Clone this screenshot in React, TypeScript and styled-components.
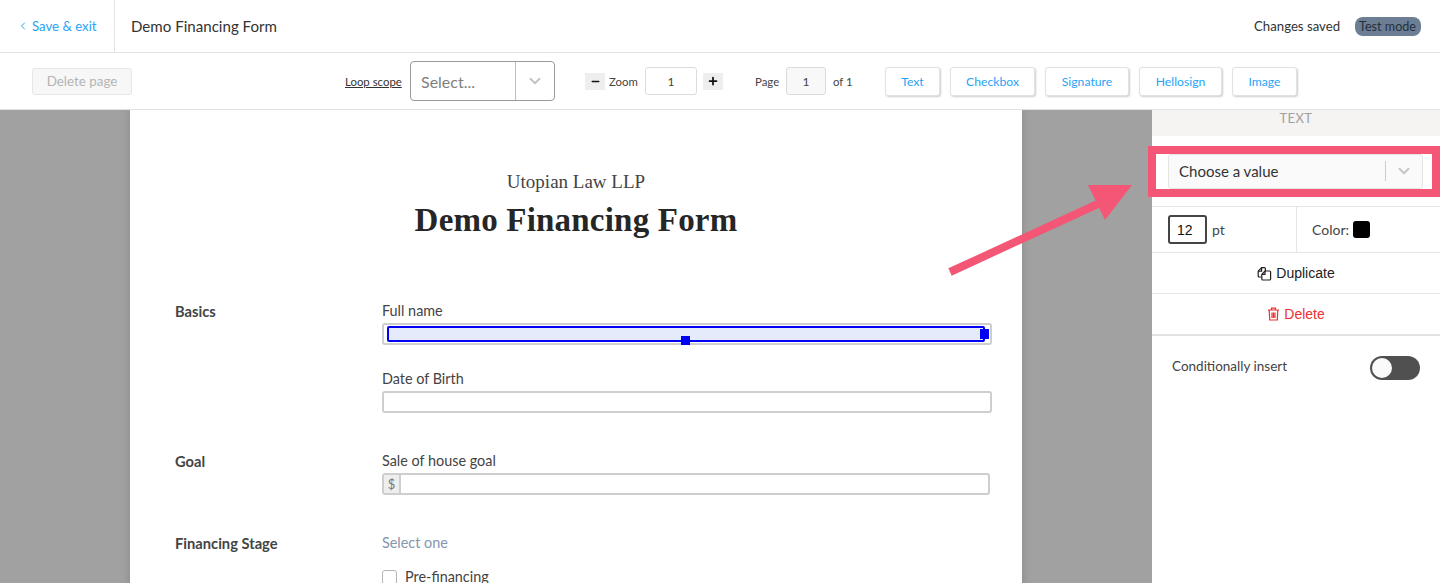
import styled, { createGlobalStyle } from "styled-components";
import { ChevronDown, ChevronLeft, Minus, Plus } from "lucide-react";

const GlobalStyle = createGlobalStyle`
	html, body {
		margin: 0;
		padding: 0;
		height: 583px;
		overflow: hidden;
		background: #fff;
		font-family: "Lato", "Noto Sans", sans-serif;
		color: #333;
	}
	* {
		box-sizing: border-box;
	}
`;

const Screen = styled.div`
	position: relative;
	width: 1440px;
	height: 583px;
	overflow: hidden;
	display: flex;
	flex-direction: column;
`;

const Header = styled.header`
	height: 53px;
	flex: none;
	display: flex;
	align-items: stretch;
	border-bottom: 1px solid #e2e2e2;
`;

const BackLink = styled.a`
	width: 115px;
	padding-left: 17px;
	display: flex;
	align-items: center;
	gap: 3px;
	font-size: 13.2px;
	color: #27a4f5;
	border-right: 1px solid #e4e4e4;
`;

const FormName = styled.div`
	flex: 1;
	padding-left: 16px;
	display: flex;
	align-items: center;
	font-size: 15.1px;
	color: #333;
`;

const SaveStatus = styled.div`
	display: flex;
	align-items: center;
	padding-right: 19px;
	gap: 15px;
	font-size: 13.2px;
	color: #333;
`;

const TestBadge = styled.span`
	background: #6c7e93;
	color: #25303c;
	font-size: 12.6px;
	line-height: 19px;
	height: 19px;
	padding: 0 5px 0 4px;
	border-radius: 8px;
`;

const Toolbar = styled.div`
	height: 57px;
	flex: none;
	padding-left: 32px;
	display: flex;
	align-items: center;
	border-bottom: 1px solid #e2e2e2;
	font-size: 11.4px;
	color: #444;
`;

const DeletePage = styled.button`
	width: 100px;
	height: 27px;
	margin-right: 213px;
	padding: 0;
	background: #f7f7f7;
	border: 1px solid #e6e6e6;
	border-radius: 3px;
	color: #b4b4b4;
	font: 13.4px "Lato", sans-serif;
`;

const LoopLabel = styled.a`
	width: 65px;
	color: #333;
	font-size: 11.4px;
	text-decoration: underline;
`;

const LoopSelect = styled.div`
	width: 145px;
	height: 40px;
	margin-right: 30px;
	display: flex;
	align-items: stretch;
	border: 1px solid #9a9a9a;
	border-radius: 4px;
`;

const SelectText = styled.div`
	flex: 1;
	padding-left: 10px;
	display: flex;
	align-items: center;
	font-size: 16px;
	color: #808080;
`;

const SelectCaret = styled.div`
	width: 39px;
	border-left: 1px solid #bdbdbd;
	display: flex;
	align-items: center;
	justify-content: center;
	color: #c4c4c4;
`;

const StepButton = styled.div<{ $left?: number }>`
	width: 20px;
	height: 17px;
	margin-left: ${(props) => props.$left ?? 0}px;
	background: #eee;
	display: flex;
	align-items: center;
	justify-content: center;
	color: #111;
`;

const ToolLabel = styled.span<{ $left: number; $width: number }>`
	margin-left: ${(props) => props.$left}px;
	width: ${(props) => props.$width}px;
	white-space: nowrap;
`;

const NumberBox = styled.div<{ $width: number; $filled?: boolean }>`
	width: ${(props) => props.$width}px;
	height: 28px;
	display: flex;
	align-items: center;
	justify-content: center;
	font-size: 12px;
	color: #444;
	background: ${(props) => (props.$filled ? "#f8f8f8" : "#fff")};
	border: 1px solid #dcdcdc;
	border-radius: 3px;
`;

const FieldButton = styled.button<{ $width: number }>`
	width: ${(props) => props.$width}px;
	height: 29px;
	margin-right: 10px;
	padding: 0;
	background: #fff;
	border: 1px solid #e2e2e2;
	border-radius: 3px;
	box-shadow: 1px 1px 2px rgba(0, 0, 0, 0.2);
	color: #27a4f5;
	font: 12.2px "Lato", sans-serif;
`;

const Workspace = styled.div`
	flex: 1;
	min-height: 0;
	display: flex;
`;

const Canvas = styled.main`
	width: 1152px;
	flex: none;
	padding-left: 130px;
	background: #a1a1a1;
	overflow: hidden;
`;

const Page = styled.div`
	width: 892px;
	height: 600px;
	padding: 62px 30px 0 45px;
	background: #fff;
	box-shadow: 0 0 8px rgba(0, 0, 0, 0.15);
`;

const PageHeading = styled.div`
	margin-right: 15px;
	text-align: center;
`;

const FirmName = styled.div`
	font: 19px/20px "Liberation Serif", serif;
	color: #444;
`;

const FormTitle = styled.h1`
	margin: 9px 0 0;
	font: bold 33px/38px "Liberation Serif", serif;
	letter-spacing: 0.2px;
	color: #262626;
`;

const FormSection = styled.section<{ $top: number }>`
	margin-top: ${(props) => props.$top}px;
	display: grid;
	grid-template-columns: 207px 1fr;
`;

const SectionName = styled.div`
	font-size: 14.7px;
	line-height: 20px;
	font-weight: 700;
	color: #444;
`;

const Fields = styled.div`
	display: flex;
	flex-direction: column;
`;

const FieldLabel = styled.label<{ $top?: number; $hint?: boolean }>`
	display: block;
	margin-top: ${(props) => props.$top ?? 0}px;
	font-size: 14.4px;
	line-height: 20px;
	color: ${(props) => (props.$hint ? "#8396ae" : "#444")};
`;

const TextBox = styled.div<{ $narrow?: boolean }>`
	position: relative;
	height: 22px;
	margin-top: 2px;
	width: ${(props) => (props.$narrow ? 608 : 610)}px;
	display: flex;
	background: #fff;
	border: 2px solid #cecece;
	border-radius: 3px;
`;

const Addon = styled.span`
	width: 17px;
	display: flex;
	align-items: center;
	justify-content: center;
	background: #eee;
	border-right: 2px solid #cecece;
	font-size: 13px;
	color: #777;
`;

const Selection = styled.div`
	position: absolute;
	left: 3px;
	right: 5px;
	top: 1px;
	height: 16px;
	background: #e6ebfb;
	border: 2px solid #0000f5;
	border-radius: 2px;
`;

const Handle = styled.span<{ $edge: "right" | "bottom" }>`
	position: absolute;
	width: 9px;
	height: 9px;
	background: #0000f5;
	${(props) => (props.$edge === "right" ? "right: -6px; top: 1px; height: 10px;" : "left: 292px; bottom: -5px;")}
`;

const CheckRow = styled.div`
	display: flex;
	align-items: center;
	gap: 8px;
	margin-top: 14px;
	font-size: 14.4px;
	line-height: 20px;
	color: #444;
`;

const CheckBox = styled.span`
	width: 15px;
	height: 15px;
	background: #fff;
	border: 1px solid #b5b5b5;
	border-radius: 3px;
`;

const Sidebar = styled.aside`
	flex: 1;
	background: #fff;
`;

const SidebarTitle = styled.div`
	height: 26px;
	background: #f5f4f3;
	text-align: center;
	font-size: 13px;
	line-height: 17px;
	letter-spacing: 0.4px;
	color: #a0a0a0;
`;

const ValueRow = styled.div`
	height: 71px;
	padding: 18px 17px 0 16px;
	border-bottom: 1px solid #e6e6e6;
`;

const ValueSelect = styled.div`
	height: 35px;
	padding: 0 0 2px 10px;
	display: flex;
	align-items: center;
	background: #fafafa;
	border: 1px solid #e4e4e4;
	border-radius: 3px;
	font-size: 15px;
	color: #333;
`;

const ValueText = styled.span`
	flex: 1;
`;

const ValueCaret = styled.span`
	width: 37px;
	height: 20px;
	border-left: 1px solid #ccc;
	display: flex;
	align-items: center;
	justify-content: center;
	color: #c4c4c4;
`;

const StyleRow = styled.div`
	height: 46px;
	display: grid;
	grid-template-columns: 145px 1fr;
	border-bottom: 1px solid #e6e6e6;
`;

const StyleCell = styled.div<{ $left: number; $divided?: boolean }>`
	display: flex;
	align-items: center;
	gap: 4px;
	padding-left: ${(props) => props.$left}px;
	font-size: 14px;
	color: #444;
	border-right: ${(props) => (props.$divided ? "1px solid #e6e6e6" : "none")};
`;

const SizeInput = styled.div`
	width: 39px;
	height: 29px;
	margin-right: 1px;
	padding-left: 7px;
	display: flex;
	align-items: center;
	background: #fff;
	border: 2px solid #444;
	border-radius: 3px;
	font: 14px "Liberation Sans", sans-serif;
	color: #111;
`;

const Swatch = styled.span`
	width: 17px;
	height: 17px;
	background: #000;
	border-radius: 3px;
`;

const ActionRow = styled.div<{ $danger?: boolean; $thick?: boolean }>`
	height: ${(props) => (props.$thick ? 42 : 41)}px;
	display: flex;
	align-items: center;
	justify-content: center;
	gap: 4px;
	border-bottom: ${(props) => (props.$thick ? "2px solid #e2e2e2" : "1px solid #e6e6e6")};
	font: 14px "Liberation Sans", sans-serif;
	color: ${(props) => (props.$danger ? "#ea3030" : "#222")};
`;

const ConditionRow = styled.div`
	height: 64px;
	padding: 0 20px;
	display: flex;
	align-items: center;
	justify-content: space-between;
	font-size: 13.5px;
	color: #444;
`;

const ConditionLabel = styled.span`
	margin-top: -4px;
`;

const Toggle = styled.span`
	position: relative;
	width: 50px;
	height: 24px;
	border-radius: 12px;
	background: #505050;
`;

const ToggleKnob = styled.span`
	position: absolute;
	left: 2px;
	top: 2px;
	width: 20px;
	height: 20px;
	border-radius: 50%;
	background: #fafafa;
`;

const Callout = styled.div`
	position: absolute;
	left: 1148px;
	top: 146px;
	width: 292px;
	height: 51px;
	border: 8px solid #f45776;
`;

const Arrow = styled.svg`
	position: absolute;
	left: 940px;
	top: 175px;
`;

const fieldButtons = [
	{ label: "Text", width: 55 },
	{ label: "Checkbox", width: 85 },
	{ label: "Signature", width: 84 },
	{ label: "Hellosign", width: 83 },
	{ label: "Image", width: 65 },
];

function DuplicateIcon(): JSX.Element {
	return (
		<svg width="15" height="15" viewBox="0 0 15 15" fill="none" stroke="#222" strokeWidth="1.2" strokeLinejoin="round">
			<path d="M4.6 11H2.2a1 1 0 0 1-1-1V5.2L4.6 1.6H7.4a1 1 0 0 1 1 1V5" />
			<path d="M8 5H12.6a1 1 0 0 1 1 1V13a1 1 0 0 1-1 1H5.8a1 1 0 0 1-1-1V8.4Z" />
			<path d="M4.6 1.6V5.2H1.2M8 5V8.4H4.8" />
		</svg>
	);
}

function TrashIcon(): JSX.Element {
	return (
		<svg width="13" height="14" viewBox="0 0 13 14" fill="none" stroke="#ea3030" strokeWidth="1.2">
			<path d="M1 3h11M4.5 3V1.2h4V3M2.2 3l.5 10h7.6l.5-10" />
			<path d="M5 5.5v5.5M6.5 5.5v5.5M8 5.5v5.5" />
		</svg>
	);
}

export default function App(): JSX.Element {
	return (
		<Screen>
			<GlobalStyle />

			<Header>
				<BackLink>
					<ChevronLeft size={12} strokeWidth={2} />
					Save &amp; exit
				</BackLink>
				<FormName>Demo Financing Form</FormName>
				<SaveStatus>
					Changes saved
					<TestBadge>Test mode</TestBadge>
				</SaveStatus>
			</Header>

			<Toolbar>
				<DeletePage>Delete page</DeletePage>
				<LoopLabel>Loop scope</LoopLabel>
				<LoopSelect>
					<SelectText>Select...</SelectText>
					<SelectCaret>
						<ChevronDown size={18} strokeWidth={2.5} />
					</SelectCaret>
				</LoopSelect>
				<StepButton>
					<Minus size={11} strokeWidth={3.5} />
				</StepButton>
				<ToolLabel $left={4} $width={36}>Zoom</ToolLabel>
				<NumberBox $width={52}>1</NumberBox>
				<StepButton $left={6}>
					<Plus size={12} strokeWidth={3.5} />
				</StepButton>
				<ToolLabel $left={32} $width={31}>Page</ToolLabel>
				<NumberBox $width={40} $filled>1</NumberBox>
				<ToolLabel $left={7} $width={52}>of 1</ToolLabel>
				{fieldButtons.map((button) => (
					<FieldButton key={button.label} $width={button.width}>{button.label}</FieldButton>
				))}
			</Toolbar>

			<Workspace>
				<Canvas>
					<Page>
						<PageHeading>
							<FirmName>Utopian Law LLP</FirmName>
							<FormTitle>Demo Financing Form</FormTitle>
						</PageHeading>

						<FormSection $top={62}>
							<SectionName>Basics</SectionName>
							<Fields>
								<FieldLabel>Full name</FieldLabel>
								<TextBox>
									<Selection>
										<Handle $edge="bottom" />
										<Handle $edge="right" />
									</Selection>
								</TextBox>
								<FieldLabel $top={24}>Date of Birth</FieldLabel>
								<TextBox />
							</Fields>
						</FormSection>

						<FormSection $top={38}>
							<SectionName>Goal</SectionName>
							<Fields>
								<FieldLabel>Sale of house goal</FieldLabel>
								<TextBox $narrow>
									<Addon>$</Addon>
								</TextBox>
							</Fields>
						</FormSection>

						<FormSection $top={38}>
							<SectionName>Financing Stage</SectionName>
							<Fields>
								<FieldLabel $hint>Select one</FieldLabel>
								<CheckRow>
									<CheckBox />
									Pre-financing
								</CheckRow>
							</Fields>
						</FormSection>
					</Page>
				</Canvas>

				<Sidebar>
					<SidebarTitle>TEXT</SidebarTitle>
					<ValueRow>
						<ValueSelect>
							<ValueText>Choose a value</ValueText>
							<ValueCaret>
								<ChevronDown size={18} strokeWidth={2.5} />
							</ValueCaret>
						</ValueSelect>
					</ValueRow>
					<StyleRow>
						<StyleCell $left={16} $divided>
							<SizeInput>12</SizeInput>
							pt
						</StyleCell>
						<StyleCell $left={15}>
							Color:
							<Swatch />
						</StyleCell>
					</StyleRow>
					<ActionRow>
						<DuplicateIcon />
						Duplicate
					</ActionRow>
					<ActionRow $danger $thick>
						<TrashIcon />
						Delete
					</ActionRow>
					<ConditionRow>
						<ConditionLabel>Conditionally insert</ConditionLabel>
						<Toggle>
							<ToggleKnob />
						</Toggle>
					</ConditionRow>
				</Sidebar>
			</Workspace>

			<Callout />
			<Arrow width="200" height="110" viewBox="0 0 200 110">
				<path d="M10 97L160 28" stroke="#f45776" strokeWidth="8" fill="none" />
				<path d="M148 10L192 10L165 45Z" fill="#f45776" />
			</Arrow>
		</Screen>
	);
}
